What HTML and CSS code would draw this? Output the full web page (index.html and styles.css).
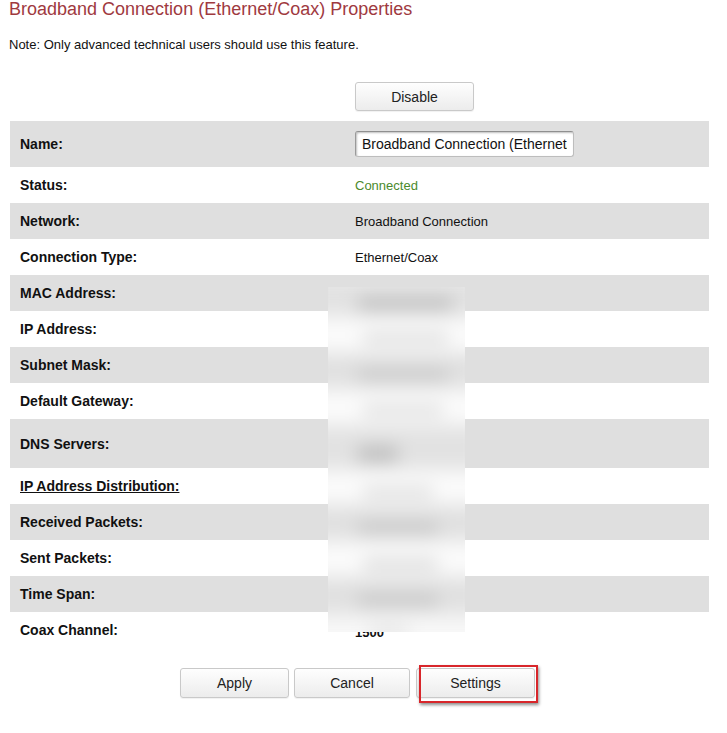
FILE: index.html
```html
<!DOCTYPE html>
<html lang="en">
  <head>
    <meta charset="UTF-8" />
    <title>Broadband Connection Properties</title>
    <link rel="stylesheet" href="styles.css">
  </head>
  <body>
    <div class="page">
      <h1 class="title">Broadband Connection (Ethernet/Coax) Properties</h1>
      <p class="note">Note: Only advanced technical users should use this feature.</p>

      <div class="top-actions">
        <button class="btn btn-disable" type="button">Disable</button>
      </div>

      <div class="props">
        <table class="props-table">
          <tr class="row-name shade">
            <th>Name:</th>
            <td><input class="name-input" type="text" value="Broadband Connection (Ethernet/Coax)" /></td>
          </tr>
          <tr>
            <th>Status:</th>
            <td class="ok">Connected</td>
          </tr>
          <tr class="shade">
            <th>Network:</th>
            <td>Broadband Connection</td>
          </tr>
          <tr>
            <th>Connection Type:</th>
            <td>Ethernet/Coax</td>
          </tr>
          <tr class="shade">
            <th>MAC Address:</th>
            <td></td>
          </tr>
          <tr>
            <th>IP Address:</th>
            <td></td>
          </tr>
          <tr class="shade">
            <th>Subnet Mask:</th>
            <td></td>
          </tr>
          <tr>
            <th>Default Gateway:</th>
            <td></td>
          </tr>
          <tr class="row-dns shade">
            <th>DNS Servers:</th>
            <td></td>
          </tr>
          <tr>
            <th><span class="link">IP Address Distribution:</span></th>
            <td></td>
          </tr>
          <tr class="shade">
            <th>Received Packets:</th>
            <td></td>
          </tr>
          <tr>
            <th>Sent Packets:</th>
            <td></td>
          </tr>
          <tr class="shade">
            <th>Time Span:</th>
            <td></td>
          </tr>
          <tr>
            <th>Coax Channel:</th>
            <td class="coax">1500</td>
          </tr>
        </table>

        <!-- redacted values -->
        <div class="redact">
          <div class="redact-inner">
            <div class="smear s1"></div>
            <div class="smear s2"></div>
            <div class="smear s3"></div>
            <div class="smear s4"></div>
            <div class="smear s5"></div>
            <div class="smear s6"></div>
            <div class="smear s7"></div>
            <div class="smear s8"></div>
            <div class="smear s9"></div>
            <div class="smear s10"></div>
          </div>
        </div>
      </div>

      <div class="bottom-actions">
        <button class="btn btn-apply" type="button">Apply</button>
        <button class="btn btn-cancel" type="button">Cancel</button>
        <div class="marked">
          <button class="btn btn-settings" type="button">Settings</button>
          <div class="mark-box"></div>
        </div>
      </div>
    </div>
  </body>
</html>
```

FILE: styles.css
```css
body {
  margin: 0;
  background: #fff;
  font-family: 'Liberation Sans', Arial, Helvetica, sans-serif;
  color: #111;
}

.page {
  width: 727px;
  padding-bottom: 30px;
}

.title {
  margin: 0 0 0 9px;
  font-size: 18px;
  line-height: 18px;
  font-weight: normal;
  color: #9f3a3f;
}

.note {
  margin: 19px 0 0 9px;
  font-size: 13px;
  line-height: 16px;
  color: #111;
}

.top-actions {
  padding-left: 355px;
  margin-top: 29px;
}

.btn {
  height: 30px;
  padding: 0;
  font-family: 'Liberation Sans', Arial, Helvetica, sans-serif;
  font-size: 14px;
  color: #222;
  background: linear-gradient(#fefefe, #ececec);
  border: 1px solid #c9c9c9;
  border-radius: 3px;
  box-shadow: 0 1px 1px rgba(0, 0, 0, 0.06);
}

.btn-disable {
  width: 119px;
  height: 29px;
}

.props {
  position: relative;
  margin: 10px 0 0 10px;
  width: 699px;
}

.props-table {
  width: 699px;
  border-collapse: collapse;
  font-size: 14px;
}

.props-table tr {
  height: 36px;
}

.props-table tr.shade {
  background: #dfdfdf;
}

.props-table th {
  width: 335px;
  padding: 0 0 0 10px;
  text-align: left;
  font-weight: bold;
  color: #111;
}

.props-table td {
  padding: 0;
  font-size: 13px;
  color: #111;
}

.props-table tr.row-name {
  height: 46px;
}

.props-table tr.row-dns {
  height: 49px;
}

.link {
  text-decoration: underline;
}

.props-table td.ok {
  color: #4b8a2c;
}

.name-input {
  width: 219px;
  height: 26px;
  box-sizing: border-box;
  margin: 0;
  padding: 0 6px;
  font-family: 'Liberation Sans', Arial, Helvetica, sans-serif;
  font-size: 14px;
  color: #111;
  background: #fff;
  border: 1px solid #bdbdbd;
  border-top-color: #8f8f8f;
  border-left-color: #9a9a9a;
  border-radius: 3px;
  box-shadow: inset 1px 1px 2px rgba(0, 0, 0, 0.25);
}

.props-table td.coax {
  vertical-align: top;
  padding-top: 13px;
  font-weight: bold;
}

.redact {
  position: absolute;
  left: 318px;
  top: 166px;
  width: 137px;
  height: 345px;
  overflow: hidden;
  background: #f3f3f3;
}

.redact-inner {
  position: absolute;
  left: -20px;
  top: -10px;
  right: -20px;
  bottom: -10px;
  filter: blur(9px);
  background: linear-gradient(
    #e2e2e2 0, #e2e2e2 34px,
    #fbfbfb 46px, #fbfbfb 70px,
    #e0e0e0 82px, #e0e0e0 106px,
    #fbfbfb 118px, #fbfbfb 142px,
    #e2e2e2 154px, #e2e2e2 188px,
    #fbfbfb 198px, #fbfbfb 222px,
    #e0e0e0 234px, #e0e0e0 258px,
    #fbfbfb 270px, #fbfbfb 294px,
    #e0e0e0 306px, #e0e0e0 330px,
    #f8f8f8 345px
  );
}

.smear {
  position: absolute;
  height: 10px;
  background: #bdbdbd;
}

.s1 { left: 50px; top: 22px; width: 95px; background: #b5b5b5; }
.s2 { left: 55px; top: 56px; width: 85px; background: #dadada; }
.s3 { left: 50px; top: 93px; width: 90px; background: #c4c4c4; }
.s4 { left: 55px; top: 128px; width: 80px; background: #dcdcdc; }
.s5 { left: 50px; top: 170px; width: 40px; height: 14px; background: #b9b9b9; }
.s6 { left: 55px; top: 210px; width: 70px; background: #dcdcdc; }
.s7 { left: 50px; top: 246px; width: 80px; background: #c2c2c2; }
.s8 { left: 55px; top: 282px; width: 75px; background: #d8d8d8; }
.s9 { left: 50px; top: 318px; width: 80px; background: #c2c2c2; }
.s10 { left: 60px; top: 350px; width: 40px; background: #e2e2e2; }

.bottom-actions {
  display: flex;
  align-items: flex-start;
  gap: 5px;
  padding-left: 180px;
  margin-top: 20px;
}

.btn-apply {
  width: 109px;
}

.btn-cancel {
  width: 116px;
}

.btn-settings {
  width: 119px;
}

.marked {
  position: relative;
  margin-left: 1px;
}

.mark-box {
  position: absolute;
  left: 3px;
  top: -3px;
  width: 119px;
  height: 38px;
  box-sizing: border-box;
  border: 2px solid #d8262b;
  box-shadow: 1px 2px 3px rgba(0, 0, 0, 0.45);
}
```
